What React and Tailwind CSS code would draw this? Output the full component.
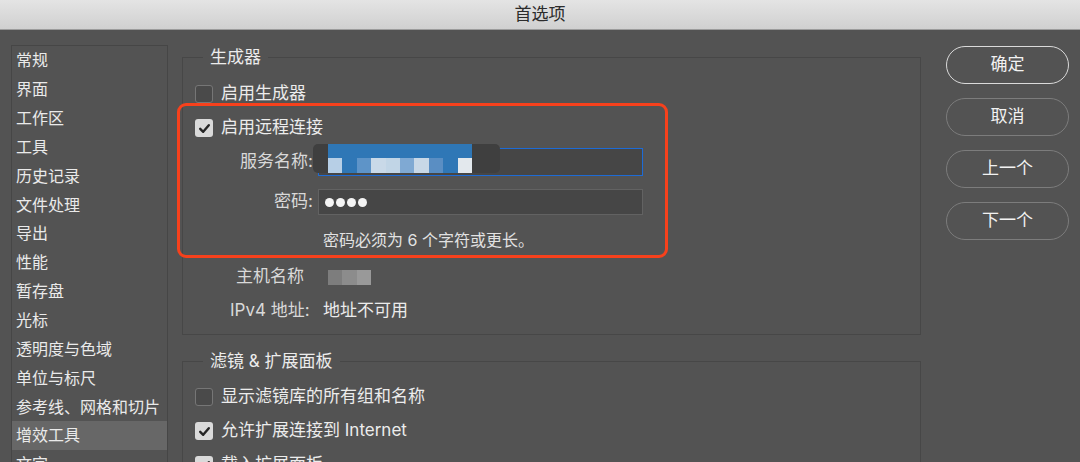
import React from "react";

const sidebarItems = [
  "常规",
  "界面",
  "工作区",
  "工具",
  "历史记录",
  "文件处理",
  "导出",
  "性能",
  "暂存盘",
  "光标",
  "透明度与色域",
  "单位与标尺",
  "参考线、网格和切片",
  "增效工具",
  "文字",
];

function Check({ checked }) {
  if (checked) {
    return (
      <span className="flex h-[18px] w-[18px] shrink-0 items-center justify-center rounded-[3px] bg-[#dadada]">
        <svg width="13" height="13" viewBox="0 0 13 13">
          <path d="M2.2 6.8 L5.2 9.8 L10.8 3.2" fill="none" stroke="#262626" strokeWidth="2.4" strokeLinecap="round" strokeLinejoin="round" />
        </svg>
      </span>
    );
  }
  return <span className="h-[18px] w-[18px] shrink-0 rounded-[3px] border border-[#767676] bg-[#4a4a4a]" />;
}

function CheckRow({ checked, children }) {
  return (
    <div className="flex h-[34px] items-center gap-[8px] pl-[12px]">
      <Check checked={checked} />
      <span className="text-[17px] text-[#ececec]">{children}</span>
    </div>
  );
}

const tiles = ["#b7cfe6", "#2f77b6", "#5e94c8", "#c9d9e8", "#c1d5e6", "#7fa9d3", "#c8d8e7", "#5a8ec3", "#2f77b6", "#e3e8ed"];

function Button({ children, primary }) {
  return (
    <div
      className={
        "flex h-[38px] items-center justify-center rounded-full text-[17px] text-[#f2f2f2] " +
        (primary ? "border-[1.5px] border-[#dadada]" : "border border-[#7c7c7c]")
      }
    >
      {children}
    </div>
  );
}

export default function App() {
  return (
    <div className="h-[462px] w-[1080px] overflow-hidden bg-[#535353] font-['Inter','Noto_Sans_CJK_SC',sans-serif]">
      <div className="flex h-[30px] items-center justify-center border-b border-[#9c9c9c] bg-gradient-to-b from-[#e4e4e4] to-[#d0d0d0] text-[17px] text-[#2c2c2c]">
        首选项
      </div>
      <div className="flex h-[432px]">
        <div className="ml-[11px] mt-[15px] h-[460px] w-[157px] shrink-0 border border-[#464646]">
          {sidebarItems.map((item, i) => (
            <div
              key={item}
              className={
                "flex h-[28.85px] items-center pl-[4px] text-[16px] text-[#eaeaea] " +
                (i === 13 ? "bg-[#676767]" : "")
              }
            >
              {item}
            </div>
          ))}
        </div>

        <div className="relative ml-[14px] w-[739px] shrink-0">
          <fieldset className="mt-[16px] border border-[#474747] pb-[12px] pt-[9px]">
            <legend className="ml-[20px] px-[7px] text-[17px] leading-[22px] text-[#ececec]">生成器</legend>
            <CheckRow checked={false}>启用生成器</CheckRow>
            <CheckRow checked={true}>启用远程连接</CheckRow>

            <div className="relative mt-[3px] flex h-[28px] items-center">
              <div className="w-[130px] text-right text-[17px] text-[#d9d9d9]">服务名称:</div>
              <div className="ml-[5px] h-[28px] w-[325px] border border-[#1d6bd6] bg-[#464646]" />
              <div className="absolute left-[130px] top-[-4px] flex h-[29px] w-[187px] overflow-hidden rounded-[5px] bg-[#3f3f3f] pl-[15px]">
                <div className="flex w-[144px] flex-col">
                  <div className="h-[14px] bg-[#2f77b6]" />
                  <div className="flex h-[15px]">
                    {tiles.map((c, i) => (
                      <div key={i} className="h-full flex-1" style={{ backgroundColor: c }} />
                    ))}
                  </div>
                </div>
              </div>
            </div>

            <div className="mt-[13px] flex h-[26px] items-center">
              <div className="w-[130px] text-right text-[17px] text-[#d9d9d9]">密码:</div>
              <div className="ml-[5px] flex h-[26px] w-[325px] items-center gap-[2px] border border-[#626262] bg-[#464646] pl-[6px]">
                <span className="h-[9px] w-[9px] rounded-full bg-[#f4f4f4]" />
                <span className="h-[9px] w-[9px] rounded-full bg-[#f4f4f4]" />
                <span className="h-[9px] w-[9px] rounded-full bg-[#f4f4f4]" />
                <span className="h-[9px] w-[9px] rounded-full bg-[#f4f4f4]" />
              </div>
            </div>

            <div className="mt-[14px] flex h-[22px] items-center pl-[140px] text-[16px] text-[#e2e2e2]">
              密码必须为 6 个字符或更长。
            </div>

            <div className="mt-[15px] flex h-[22px] items-center pl-[53px]">
              <span className="text-[17px] text-[#d9d9d9]">主机名称</span>
              <div className="ml-[24px] flex h-[15px] w-[43px]">
                <div className="flex-1 bg-[#7d7d7d]" />
                <div className="flex-1 bg-[#8c8c8c]" />
                <div className="flex-1 bg-[#999999]" />
              </div>
            </div>

            <div className="mt-[12px] flex h-[22px] items-center pl-[47px] text-[17px]">
              <span className="w-[93px] text-[#d9d9d9]">IPv4 地址:</span>
              <span className="text-[#ececec]">地址不可用</span>
            </div>
          </fieldset>

          <fieldset className="mt-[15px] h-[200px] border border-[#474747] pt-[8px]">
            <legend className="ml-[20px] px-[7px] text-[17px] leading-[22px] text-[#ececec]">滤镜 &amp; 扩展面板</legend>
            <CheckRow checked={false}>显示滤镜库的所有组和名称</CheckRow>
            <CheckRow checked={true}>允许扩展连接到 Internet</CheckRow>
            <CheckRow checked={true}>载入扩展面板</CheckRow>
          </fieldset>

          <div className="pointer-events-none absolute left-[-5px] top-[73px] h-[155px] w-[491px] rounded-[9px] border-[3px] border-[#f7411c]" />
        </div>

        <div className="ml-[25px] mt-[16px] flex w-[123px] shrink-0 flex-col gap-[14px]">
          <Button primary>确定</Button>
          <Button>取消</Button>
          <Button>上一个</Button>
          <Button>下一个</Button>
        </div>
      </div>
    </div>
  );
}
